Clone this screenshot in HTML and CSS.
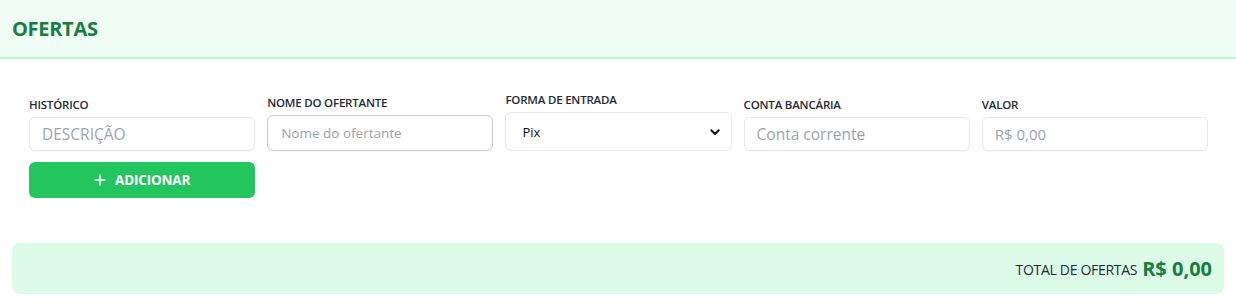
FILE: index.html
```html
<!DOCTYPE html>
<html lang="pt-BR">
<head>
<meta charset="utf-8">
<link rel="stylesheet" href="styles.css">
</head>
<body>
<div class="panel">
  <header class="panel-head"><h2 class="title">OFERTAS</h2></header>
  <section class="form">
    <div class="row">
      <div class="field">
        <label class="label">HISTÓRICO</label>
        <input class="input input-lg" type="text" placeholder="DESCRIÇÃO">
      </div>
      <div class="field">
        <label class="label">NOME DO OFERTANTE</label>
        <input class="input input-sm" type="text" placeholder="Nome do ofertante">
      </div>
      <div class="field">
        <label class="label">FORMA DE ENTRADA</label>
        <div class="select">
          <span>Pix</span>
          <svg class="chev" width="10" height="7" viewBox="0 0 10 7"><path d="M1.3 1.3 L5 5 L8.7 1.3" fill="none" stroke="#111" stroke-width="2" stroke-linecap="round" stroke-linejoin="round"/></svg>
        </div>
      </div>
      <div class="field">
        <label class="label">CONTA BANCÁRIA</label>
        <input class="input input-lg" type="text" placeholder="Conta corrente">
      </div>
      <div class="field">
        <label class="label">VALOR</label>
        <input class="input input-md" type="text" placeholder="R$ 0,00">
      </div>
    </div>
    <div class="row">
      <button class="btn" type="button">
        <svg width="12" height="12" viewBox="0 0 12 12"><path d="M6 1 V11 M1 6 H11" stroke="#fff" stroke-width="1.6" stroke-linecap="round"/></svg>
        <span>ADICIONAR</span>
      </button>
    </div>
  </section>
  <footer class="total">
    <span class="total-label">TOTAL DE OFERTAS</span>
    <span class="total-value">R$ 0,00</span>
  </footer>
</div>
</body>
</html>
```
FILE: styles.css
```css
* { box-sizing: border-box; }
body {
  margin: 0;
  background: #fff;
  font-family: "Open Sans", "Noto Sans", sans-serif;
  color: #1f2937;
}
.panel-head {
  height: 59px;
  background: #f0fdf4;
  border-bottom: 2px solid #bbf7d0;
  display: flex;
  align-items: center;
  padding: 0 12px;
}
.title {
  margin: 0;
  font-size: 20px;
  font-weight: 700;
  color: #15803d;
  letter-spacing: -0.3px;
}
.form {
  padding: 33px 28px 0 29px;
  display: flex;
  flex-direction: column;
  gap: 11px;
}
.row {
  display: grid;
  grid-template-columns: repeat(5, 1fr);
  column-gap: 12px;
  align-items: end;
}
.field {
  display: flex;
  flex-direction: column;
}
.label {
  font-size: 11.5px;
  font-weight: 600;
  color: #1f2937;
  line-height: 16px;
  margin-bottom: 4px;
  letter-spacing: -0.2px;
}
.input {
  width: 100%;
  border: 1px solid #e5e7eb;
  border-radius: 6px;
  background: #fff;
  font-family: inherit;
  padding: 0 12px;
  outline: none;
  box-shadow: 0 1px 1px rgba(0,0,0,0.03);
}
.input::placeholder { color: #9ca3af; }
.input-lg { height: 34px; font-size: 15.5px; }
.input-md { height: 34px; font-size: 15px; }
.input-sm {
  height: 36px;
  font-size: 13.5px;
  border-color: #c9ccd1;
  padding-left: 13px;
}
.select {
  height: 39px;
  border: 1px solid #e5e7eb;
  border-radius: 6px;
  display: flex;
  align-items: center;
  justify-content: space-between;
  padding: 0 11px 0 16px;
  font-size: 13px;
  color: #111;
}
.chev { margin-top: 1px; }
.btn {
  grid-column: 1;
  height: 36px;
  border: none;
  border-radius: 6px;
  background: #22c55e;
  color: #fff;
  font-family: inherit;
  font-size: 13.5px;
  font-weight: 700;
  display: flex;
  align-items: center;
  justify-content: center;
  gap: 9px;
  letter-spacing: -0.2px;
}
.total {
  margin: 45px 12px 0;
  height: 51px;
  background: #dcfce7;
  border-radius: 8px;
  display: flex;
  align-items: center;
  justify-content: flex-end;
  gap: 5px;
  padding-right: 12px;
}
.total-label {
  font-size: 14px;
  color: #1f2937;
  letter-spacing: -0.3px;
  margin-top: 2px;
}
.total-value {
  font-size: 20px;
  font-weight: 700;
  color: #15803d;
}
```
